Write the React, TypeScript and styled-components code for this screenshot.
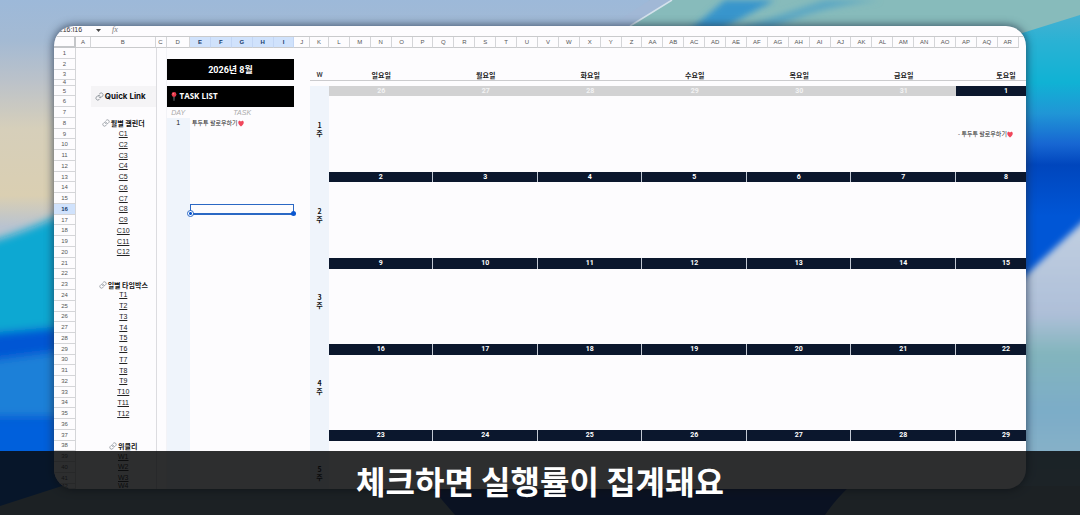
import React from "react";
import styled, { createGlobalStyle, css } from "styled-components";

const sans = `"Liberation Sans", "Noto Sans CJK KR", sans-serif`;
const korean = `"Noto Sans CJK KR", sans-serif`;
const numeric = `Roboto, "Liberation Sans", sans-serif`;

const GlobalStyle = createGlobalStyle`
  * { box-sizing: border-box; }
  body { margin: 0; font-family: ${sans}; background: #7cacc8; }
`;

const Page = styled.div`
  position: relative;
  display: flex;
  min-height: 100vh;
  padding: 26px 5%;
  overflow: hidden;
`;

const Wallpaper = styled.svg`
  position: absolute;
  inset: 0;
  width: 100%;
  height: 100%;
`;

const Window = styled.main`
  position: relative;
  display: flex;
  flex: 1;
  flex-direction: column;
  min-width: 0;
  overflow: hidden;
  border-radius: 20px;
  background: #fdfcfe;
  box-shadow: 0 0 9px 1px rgba(30, 45, 70, 0.7);
`;

const FormulaBar = styled.div`
  display: flex;
  flex: none;
  align-items: center;
  height: 11px;
  padding: 0 4px 2px;
  overflow: hidden;
  border-bottom: 1px solid #c9cacc;
`;

const NameBox = styled.input`
  width: 36px;
  height: 8px;
  padding: 0;
  border: 0;
  outline: 0;
  background: transparent;
  color: #333;
  font: 7px/8px ${sans};
`;

const MenuButton = styled.button`
  display: flex;
  width: 8px;
  height: 8px;
  padding: 0;
  align-items: center;
  justify-content: center;
  border: 0;
  background: none;
`;

const Fx = styled.span`
  margin-left: 10px;
  color: #777;
  font: italic 8px/8px "Liberation Serif", serif;
`;

const Sheet = styled.table`
  display: grid;
  flex: 1;
  min-height: 452px;
  grid-template-columns:
    minmax(0, 220fr) minmax(0, 150fr) minmax(0, 645fr) minmax(0, 110fr) minmax(0, 235fr)
    repeat(5, minmax(0, 209fr)) minmax(0, 155fr) minmax(0, 190fr)
    repeat(33, minmax(0, 209fr)) minmax(0, 73fr);
  grid-template-rows: 11px repeat(3, minmax(0, 2fr)) minmax(0, 1fr) repeat(37, minmax(0, 2fr)) minmax(0, 1fr);
`;

const Section = styled.tbody`
  display: contents;
`;

const HeadSection = styled.thead`
  display: contents;
`;

const Row = styled.tr`
  display: contents;
`;

type Place = { $col: number; $row: number; $cols?: number; $rows?: number };

const place = css<Place>`
  grid-column: ${(p) => p.$col} / span ${(p) => p.$cols ?? 1};
  grid-row: ${(p) => p.$row} / span ${(p) => p.$rows ?? 1};
`;

/* Cell text never widens or heightens the sheet's tracks. */
const centered = css`
  display: flex;
  align-items: center;
  justify-content: center;
  min-width: 0;
  min-height: 0;
  padding: 0;
  contain: size;
  white-space: nowrap;
`;

const ColumnHead = styled.th<Place & { $active?: boolean }>`
  ${place}
  ${centered}
  border-right: 1px solid ${(p) => (p.$active ? "#c3d6f5" : "#d4d5d8")};
  border-bottom: 1px solid #c9cacc;
  background: ${(p) => (p.$active ? "#d0e2fc" : "#fdfcfe")};
  color: ${(p) => (p.$active ? "#173a6b" : "#555")};
  font: ${(p) => (p.$active ? 700 : 400)} 6px/8px ${sans};
`;

const Corner = styled.td<Place>`
  ${place}
  padding: 0;
  border-right: 2px solid #c4c6c9;
  border-bottom: 2px solid #c4c6c9;
`;

const RowHead = styled.th<Place & { $active?: boolean }>`
  ${place}
  ${centered}
  overflow: hidden;
  border-right: 1px solid #d4d5d8;
  border-bottom: 1px solid #d4d5d8;
  background: ${(p) => (p.$active ? "#d0e2fc" : "#fdfcfe")};
  color: ${(p) => (p.$active ? "#173a6b" : "#555")};
  font: ${(p) => (p.$active ? 700 : 400)} 6px/6px ${sans};
`;

const Strip = styled.td<Place>`
  ${place}
  padding: 0;
  background: #eff4fb;
`;

const Divider = styled.td<Place>`
  ${place}
  padding: 0;
  border-left: 1px solid #dcdce0;
  border-right: 1px solid #f3f3f7;
`;

const MonthTitle = styled.td<Place>`
  ${place}
  ${centered}
  background: #000;
  color: #fff;
  font: 700 9px/12px ${numeric.replace('"Liberation Sans"', '"Noto Sans CJK KR"')};
`;

const TaskTitle = styled.td<Place>`
  ${place}
  ${centered}
  justify-content: flex-start;
  gap: 3px;
  padding-left: 4px;
  background: #000;
  color: #fff;
  font: 700 8px/12px "Open Sans", sans-serif;
`;

const TaskHead = styled.th<Place>`
  ${place}
  ${centered}
  color: #aaa;
  font: italic 400 7px/8px ${sans};
`;

const TaskDay = styled.td<Place>`
  ${place}
  ${centered}
  color: #222;
  font: 7px/8px ${sans};
`;

const TaskText = styled.td<Place>`
  ${place}
  ${centered}
  justify-content: flex-start;
  padding-left: 2px;
  color: #222;
  font: 6px/8px ${korean};
`;

const QuickLinkTitle = styled.td<Place>`
  ${place}
  ${centered}
  gap: 1px;
  padding-right: 6px;
  background: #f5f4f6;
  color: #111;
  font: 700 8px/12px Inter, sans-serif;
`;

const GroupTitle = styled.td<Place>`
  ${place}
  ${centered}
  gap: 1px;
  color: #111;
  font: 700 7px/10px ${korean};
`;

const LinkCell = styled.td<Place>`
  ${place}
  ${centered}
`;

const SheetLink = styled.a`
  color: #222;
  font: 7px/8px ${sans};
  text-decoration: underline;
  text-underline-offset: 1px;
`;

const WeekRule = styled.td<Place>`
  ${place}
  padding: 0;
  border-top: 1px solid #cbcbce;
`;

const WeekLabel = styled.th<Place>`
  ${place}
  ${centered}
  color: #333;
  font: 500 7px/8px ${numeric};
`;

const WeekNumber = styled.th<Place>`
  ${place}
  ${centered}
  flex-direction: column;
  color: #111;
  font: 700 7px/8px ${korean};
`;

const Weekday = styled.th<Place & { $cut?: boolean }>`
  ${place}
  ${centered}
  padding-left: ${(p) => (p.$cut ? 30 : 0)}px;
  color: #222;
  font: 700 7px/8px ${korean};
`;

const DateBand = styled.td<Place & { $muted?: boolean; $cut?: boolean }>`
  ${place}
  ${centered}
  padding-left: ${(p) => (p.$cut ? 30 : 0)}px;
  border-right: ${(p) => (p.$cut || p.$muted ? "0" : "1px solid #c3c9d4")};
  background: ${(p) => (p.$muted ? "#d2d2d3" : "#0b172d")};
  color: ${(p) => (p.$muted ? "#f3f3f3" : "#fff")};
  font: 700 7px/8px ${numeric};
`;

const Selection = styled.td<Place>`
  ${place}
  position: relative;
  padding: 0;
  border: 1px solid #2b68c4;
  border-bottom-width: 2px;
`;

const StartHandle = styled.span`
  position: absolute;
  bottom: -4px;
  left: -4px;
  width: 7px;
  height: 7px;
  border: 1px solid #2b68c4;
  border-radius: 50%;
  background: radial-gradient(#0b57d0 0 1px, #fff 2px);
`;

const EndHandle = styled.span`
  position: absolute;
  right: -3px;
  bottom: -3px;
  width: 5px;
  height: 5px;
  border-radius: 50%;
  background: #0b57d0;
`;

const Caption = styled.p`
  position: absolute;
  right: 0;
  bottom: 0;
  left: 0;
  display: flex;
  align-items: center;
  justify-content: center;
  height: 64px;
  margin: 0;
  padding-bottom: 6px;
  background: rgba(8, 9, 10, 0.85);
  color: #fff;
  font: 700 32px/48px ${korean};
`;

const LinkIcon = ({ size = 8 }: { size?: number }) => (
  <svg width={size} height={size} viewBox="0 0 24 24" fill="none" stroke="#8b9299" strokeWidth="2.4" strokeLinecap="round" aria-hidden="true">
    <path d="M10 13a5 5 0 0 0 7.5.5l3-3a5 5 0 0 0-7-7l-1.700 1.700" />
    <path d="M14 11a5 5 0 0 0-7.500-.5l-3 3a5 5 0 0 0 7 7l1.700-1.700" />
  </svg>
);

const PinIcon = () => (
  <svg width="6" height="9" viewBox="0 0 12 18" aria-hidden="true">
    <path d="M5.200 9h1.600L6.400 18h-.8z" fill="#b9c3cc" />
    <circle cx="6" cy="5" r="4.800" fill="#e8394a" />
    <circle cx="4.500" cy="3.500" r="1.300" fill="#ff9aa2" />
  </svg>
);

const HeartIcon = () => (
  <svg width="6" height="7" viewBox="0 0 24 24" preserveAspectRatio="none" aria-hidden="true">
    <path d="M12 22C5 16.500 1 13 1 8.200 1 4.800 3.600 2.500 6.600 2.500c2.200 0 4.200 1.200 5.400 3.300 1.200-2.100 3.200-3.300 5.400-3.300 3 0 5.600 2.300 5.600 5.700C23 13 19 16.500 12 22z" fill="#f0475c" />
  </svg>
);

const columnName = (i: number) => (i < 26 ? "" : "A") + String.fromCharCode(65 + (i % 26));
const columns = Array.from({ length: 44 }, (_, i) => columnName(i));
const weekdays = ["일요일", "월요일", "화요일", "수요일", "목요일", "금요일", "토요일"];
const sheetRows = Array.from({ length: 42 }, (_, i) => i + 1);

const groups = [
  { row: 8, title: "월별 캘린더", prefix: "C", count: 12 },
  { row: 23, title: "일별 타임박스", prefix: "T", count: 12 },
  { row: 38, title: "위클리", prefix: "W", count: 4 },
];

const weeks = [
  { row: 5, dates: [26, 27, 28, 29, 30, 31, 1] },
  { row: 13, dates: [2, 3, 4, 5, 6, 7, 8] },
  { row: 21, dates: [9, 10, 11, 12, 13, 14, 15] },
  { row: 29, dates: [16, 17, 18, 19, 20, 21, 22] },
  { row: 37, dates: [23, 24, 25, 26, 27, 28, 29] },
];

const dayPlace = (day: number) => ({ $col: 13 + day * 5, $cols: day === 6 ? 4 : 5 });

function GroupCells({ row }: { row: number }) {
  return (
    <>
      {groups.map((g) => {
        if (row === g.row) {
          return (
            <GroupTitle key={g.prefix} $col={3} $row={row + 1}>
              <LinkIcon /> {g.title}
            </GroupTitle>
          );
        }
        const n = row - g.row;
        if (n < 1 || n > g.count) return null;
        return (
          <LinkCell key={g.prefix} $col={3} $row={row + 1}>
            <SheetLink href={`#${g.prefix}${n}`}>{`${g.prefix}${n}`}</SheetLink>
          </LinkCell>
        );
      })}
    </>
  );
}

function WeekCells({ row }: { row: number }) {
  const index = weeks.findIndex((w) => w.row === row);
  if (index < 0) return null;
  const last = index === weeks.length - 1;
  return (
    <>
      {weeks[index].dates.map((date, day) => (
        <DateBand key={day} {...dayPlace(day)} $row={row + 1} $muted={index === 0 && day < 6} $cut={day === 6}>
          {date}
        </DateBand>
      ))}
      <WeekNumber $col={12} $row={row + (last ? 4 : 1)} $rows={last ? 2 : 8}>
        <span>{index + 1}</span>
        <span>주</span>
      </WeekNumber>
    </>
  );
}

function RowCells({ row }: { row: number }) {
  return (
    <>
      {row === 1 && <Divider $col={4} $row={2} $rows={42} />}
      {row === 2 && <MonthTitle $col={5} $row={3} $cols={6} $rows={2}>2026년 8월</MonthTitle>}
      {row === 3 && (
        <>
          <WeekLabel $col={12} $row={4}>W</WeekLabel>
          {weekdays.map((name, day) => (
            <Weekday key={name} {...dayPlace(day)} $row={4} $cut={day === 6}>{name}</Weekday>
          ))}
        </>
      )}
      {row === 4 && <WeekRule $col={12} $row={5} $cols={35} />}
      {row === 5 && (
        <>
          <QuickLinkTitle $col={3} $row={6} $rows={2}><LinkIcon size={9} /> Quick Link</QuickLinkTitle>
          <TaskTitle $col={5} $row={6} $cols={6} $rows={2}><PinIcon /> TASK LIST</TaskTitle>
          <Strip $col={12} $row={6} $rows={38} />
        </>
      )}
      {row === 7 && (
        <>
          <TaskHead $col={5} $row={8}>DAY</TaskHead>
          <TaskHead $col={6} $row={8} $cols={5}>TASK</TaskHead>
        </>
      )}
      {row === 8 && (
        <>
          <Strip $col={5} $row={9} $rows={35} />
          <TaskDay $col={5} $row={9}>1</TaskDay>
          <TaskText $col={6} $row={9} $cols={5}>투두투 팔로우하기<HeartIcon /></TaskText>
        </>
      )}
      {row === 9 && <TaskText $col={43} $row={10} $cols={4}>- 투두투 팔로우하기<HeartIcon /></TaskText>}
      {row === 16 && (
        <Selection $col={6} $row={17} $cols={5}>
          <StartHandle />
          <EndHandle />
        </Selection>
      )}
      <GroupCells row={row} />
      <WeekCells row={row} />
    </>
  );
}

const Background = () => (
  <Wallpaper viewBox="0 0 1080 515" preserveAspectRatio="none" aria-hidden="true">
    <defs>
      <linearGradient id="left" x1="0" y1="0" x2="0" y2="1">
        <stop offset="0" stopColor="#9db9d9" />
        <stop offset=".08" stopColor="#a4bad3" />
        <stop offset=".16" stopColor="#bcc2c9" />
        <stop offset=".25" stopColor="#d6cfba" />
        <stop offset=".38" stopColor="#dacfb2" />
        <stop offset=".44" stopColor="#b9c3d0" />
        <stop offset="1" stopColor="#b9c3d0" />
      </linearGradient>
      <linearGradient id="right" x1="0" y1="0" x2="0" y2="1">
        <stop offset="0" stopColor="#54b0d0" />
        <stop offset=".08" stopColor="#2ab2d4" />
        <stop offset=".16" stopColor="#10b2d4" />
        <stop offset=".22" stopColor="#2096d6" />
        <stop offset=".28" stopColor="#1766d2" />
        <stop offset=".32" stopColor="#0046bd" />
        <stop offset=".42" stopColor="#0056d6" />
        <stop offset="1" stopColor="#0056d6" />
      </linearGradient>
      <linearGradient id="silver" x1="0" y1="220" x2="0" y2="515" gradientUnits="userSpaceOnUse">
        <stop offset="0" stopColor="#c2d0e2" />
        <stop offset=".32" stopColor="#aebfd8" />
        <stop offset=".45" stopColor="#83b5bd" />
        <stop offset=".65" stopColor="#7cacc8" />
        <stop offset="1" stopColor="#95b8c8" />
      </linearGradient>
      <filter id="soft" x="-20%" y="-20%" width="140%" height="140%">
        <feGaussianBlur stdDeviation="4" />
      </filter>
      <filter id="edge">
        <feGaussianBlur stdDeviation="3" />
      </filter>
    </defs>
    <rect width="1080" height="515" fill="url(#left)" />
    <g filter="url(#soft)">
      <path d="M-20 244Q30 232 90 200V350H-20z" fill="#08a8d2" />
      <path d="M-20 334L90 324V540H-20z" fill="#0057d4" />
      <path d="M-20 362L90 348V416H-20z" fill="#1c80d8" />
      <path d="M-20 420H90V540H-20z" fill="#0060dc" />
    </g>
    <path d="M672 0H1080V515H900V40H640z" fill="url(#right)" />
    <path d="M650 0H1080V15L1000 40H613z" fill="#87bbbb" />
    <g filter="url(#edge)">
      <path d="M725 0H775L720 30H690z" fill="#3795cc" />
      <path d="M825 0H880Q810 8 770 30H735z" fill="#5ca7c4" />
      <path d="M1010 290L1090 215V530H1010z" fill="url(#silver)" />
    </g>
    <path d="M672 0L630 26H610L650 0z" fill="#a1b8d6" />
    <path d="M672 0L630 26" stroke="#d5e2ec" strokeWidth="1.500" />
    <path d="M0 506L62 486H1080V515H0z" fill="#8aa6b4" />
    <path d="M430 486H850Q835 500 825 515H455z" fill="#1442a8" />
  </Wallpaper>
);

export default function App() {
  return (
    <Page>
      <GlobalStyle />
      <Background />
      <Window>
        <FormulaBar>
          <NameBox aria-label="Name box" defaultValue="E16:I16" />
          <MenuButton aria-label="Named ranges">
            <svg width="5" height="3" viewBox="0 0 5 3" aria-hidden="true"><path d="M0 0h5L2.500 3z" fill="#444" /></svg>
          </MenuButton>
          <Fx>fx</Fx>
        </FormulaBar>
        <Sheet>
          <HeadSection>
            <Row>
              <Corner $col={1} $row={1} />
              {columns.map((name, i) => (
                <ColumnHead key={name} scope="col" $col={i + 2} $row={1} $active={i >= 4 && i <= 8}>{name}</ColumnHead>
              ))}
            </Row>
          </HeadSection>
          <Section>
            {sheetRows.map((row) => (
              <Row key={row}>
                <RowHead scope="row" $col={1} $row={row + 1} $active={row === 16}>{row}</RowHead>
                <RowCells row={row} />
              </Row>
            ))}
          </Section>
        </Sheet>
      </Window>
      <Caption>체크하면 실행률이 집계돼요</Caption>
    </Page>
  );
}
